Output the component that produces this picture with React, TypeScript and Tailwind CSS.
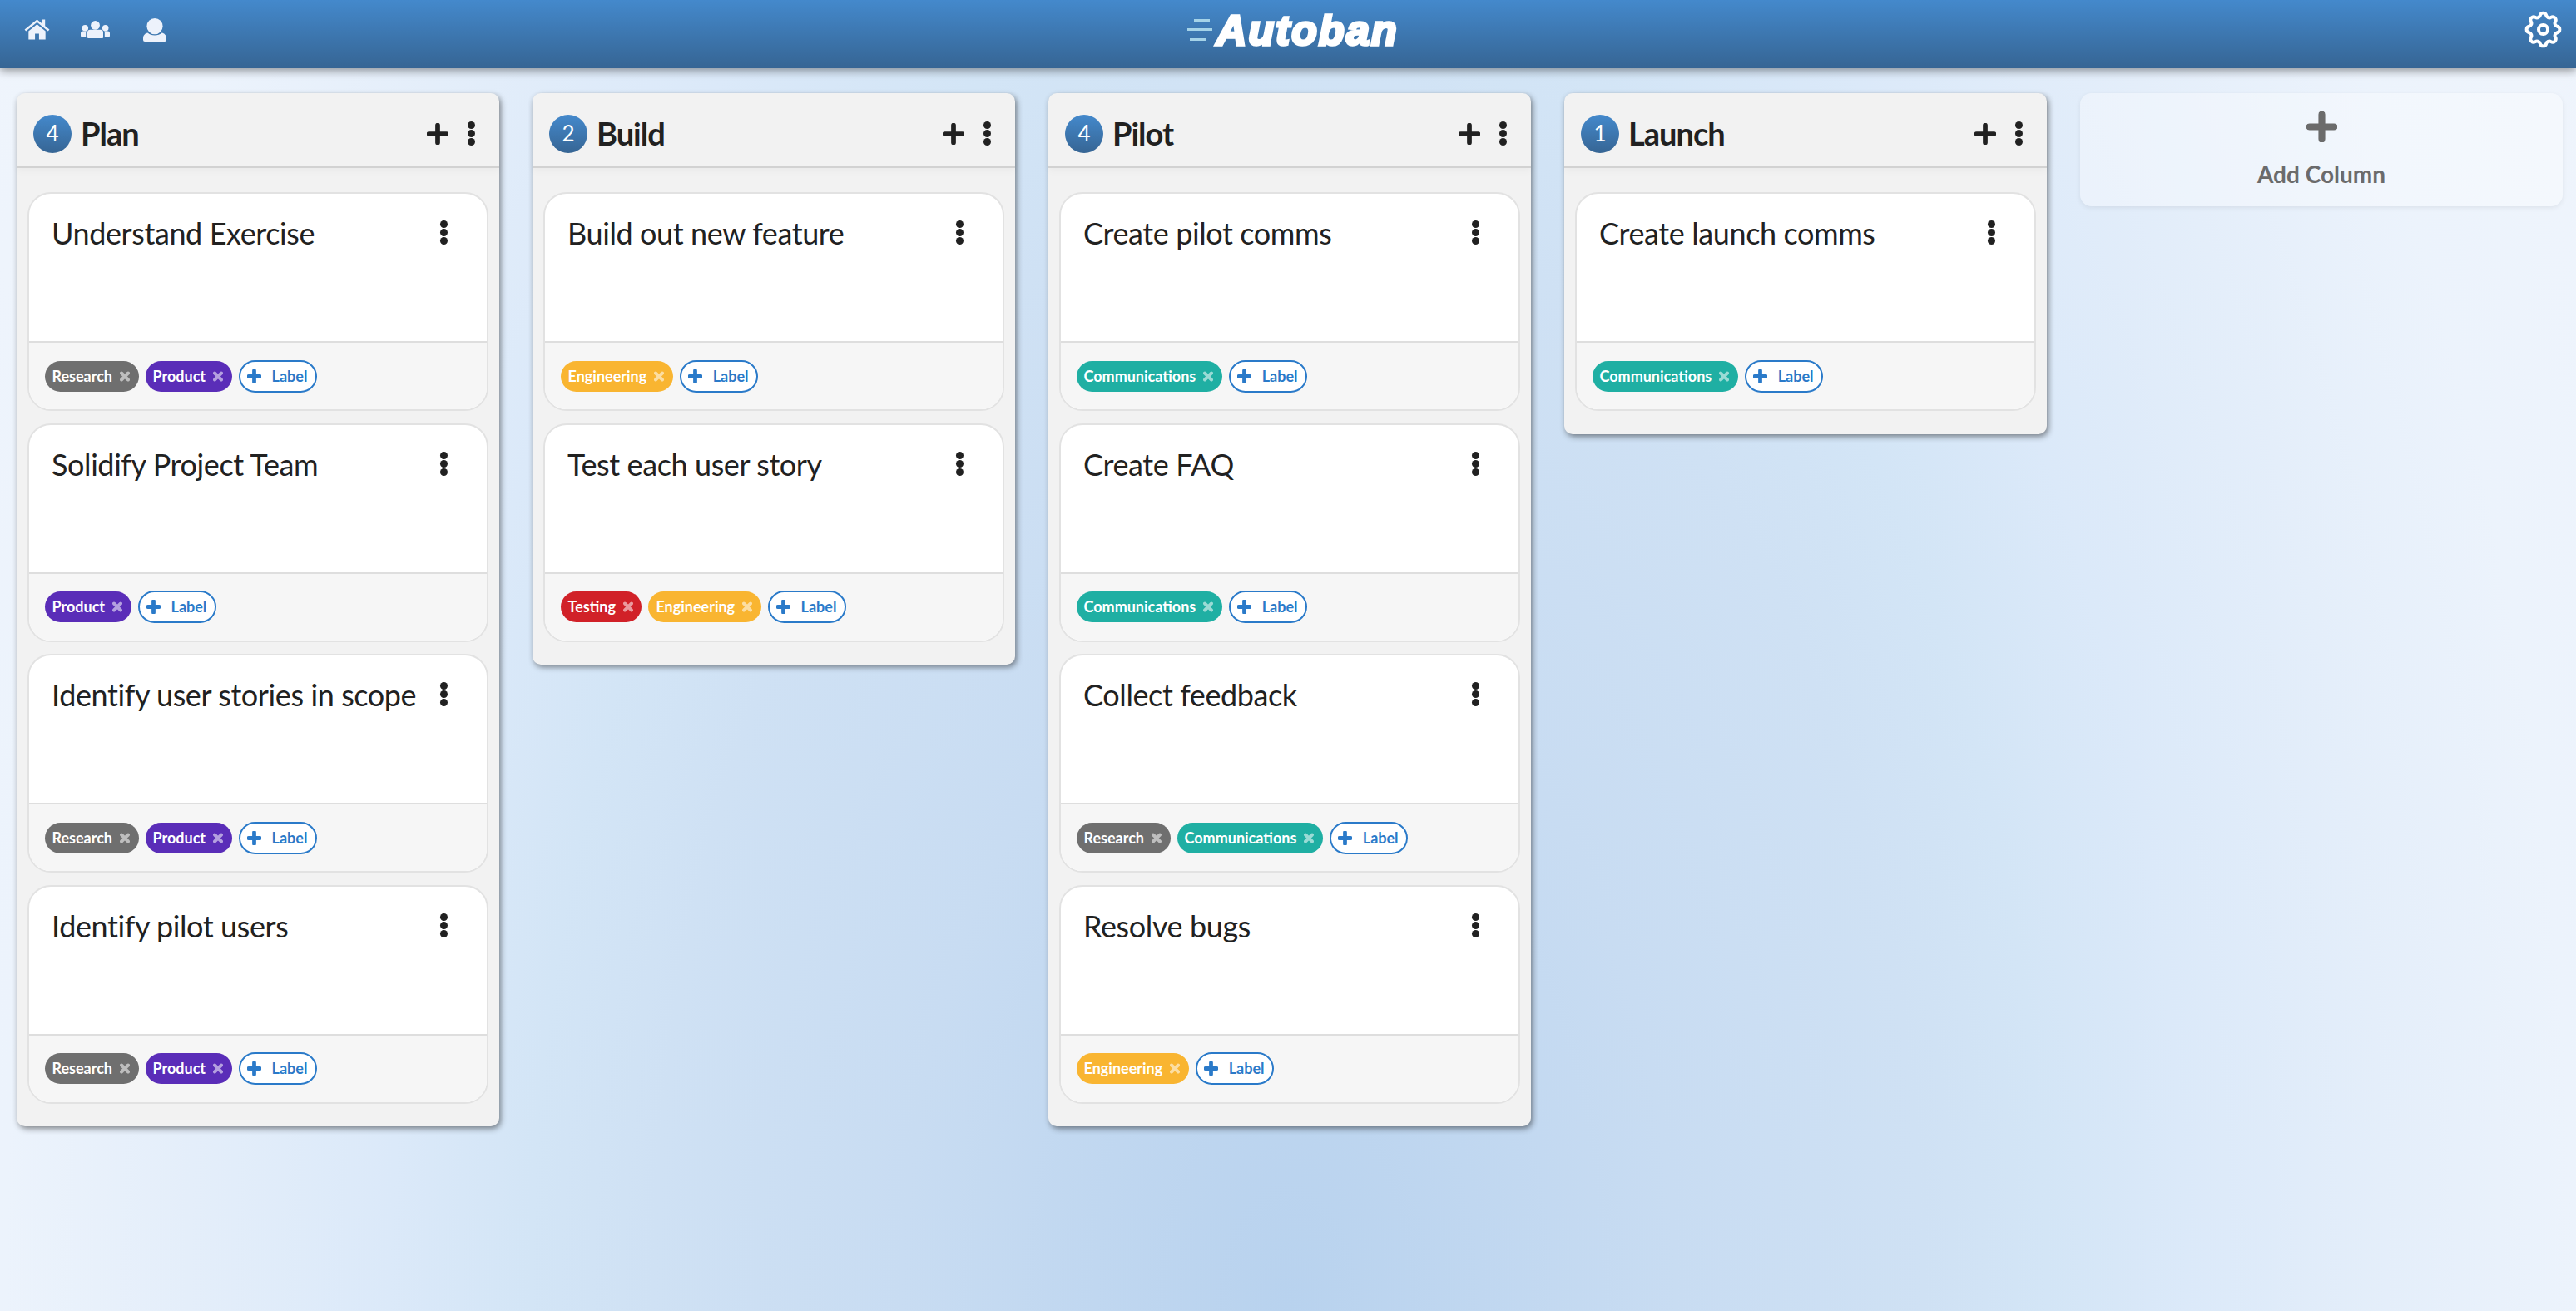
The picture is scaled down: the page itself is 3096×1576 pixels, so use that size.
import React from 'react';

const grad = 'bg-[linear-gradient(180deg,#4489cc_0%,#366594_100%)]';

function Dots() {
  const d = 'w-[9px] h-[9px] rounded-full bg-[#212121]';
  return (
    <div className="flex flex-col gap-[1px]">
      <span className={d} />
      <span className={d} />
      <span className={d} />
    </div>
  );
}

function Plus({ className, color, weight = 5.5 }: { className: string; color: string; weight?: number }) {
  return (
    <svg viewBox="0 0 25 25" className={className}>
      <path d="M12.5 2.5v20M2.5 12.5h20" stroke={color} strokeWidth={weight} strokeLinecap="round" fill="none" />
    </svg>
  );
}

const tagColors: Record<string, string> = {
  Research: 'bg-[#6f6f6f]',
  Product: 'bg-[#5a2db8]',
  Engineering: 'bg-[#f9b531]',
  Communications: 'bg-[#1fafa3]',
  Testing: 'bg-[#d12128]',
};

function Tag({ name }: { name: string }) {
  return (
    <span className={`${tagColors[name]} h-[37px] rounded-full pl-[9px] pr-[10.5px] flex items-center gap-[9px] text-white font-bold text-[18px]`}>
      <span>{name}</span>
      <svg viewBox="0 0 12 12" className="w-[12px] h-[13px]">
        <path d="M2 2l8 8M10 2l-8 8" stroke="#fff" strokeOpacity="0.55" strokeWidth="4" strokeLinecap="round" fill="none" />
      </svg>
    </span>
  );
}

function AddLabel() {
  return (
    <span className="h-[39px] w-[94px] rounded-full border-2 border-[#2a7ac9] bg-white flex items-center pl-[8px] gap-[13px] text-[#2a7ac9] font-bold text-[18px]">
      <Plus className="w-[17px] h-[17px]" color="#2a7ac9" weight={7} />
      <span>Label</span>
    </span>
  );
}

function Card({ title, tags }: { title: string; tags: string[] }) {
  return (
    <div className="h-[263px] rounded-[28px] border-2 border-[#e2e2e2] overflow-hidden flex flex-col bg-white">
      <div className="flex-1 flex justify-between pl-[27px] pr-[47px] pt-[24px]">
        <span className="text-[36px] leading-[46px] tracking-[-0.4px] text-[#212121]">{title}</span>
        <div className="pt-[8px]"><Dots /></div>
      </div>
      <div className="h-[82px] border-t-2 border-[#dedede] bg-[#f6f6f6] flex items-center pl-[18.5px] gap-[8px]">
        {tags.map((t) => <Tag key={t} name={t} />)}
        <AddLabel />
      </div>
    </div>
  );
}

function Column({ count, name, cards }: { count: number; name: string; cards: { t: string; l: string[] }[] }) {
  return (
    <div className="w-[580px] shrink-0 rounded-[10px] bg-[#f2f2f2] shadow-[2px_3px_7px_rgba(0,0,0,0.45)] pb-[27.5px]">
      <div className="h-[90px] pt-[9px] border-b-2 border-[#d2d2d2] flex items-center pl-[20px] pr-[29px] shadow-[0_4px_8px_rgba(0,0,0,0.03)]">
        <span className={`${grad} w-[46px] h-[46px] rounded-full flex items-center justify-center text-white text-[26px]`}>{count}</span>
        <span className="ml-[11px] text-[38px] font-bold tracking-[-1px] text-[#212121] flex-1">{name}</span>
        <Plus className="w-[26px] h-[26px] mr-[23px]" color="#212121" />
        <Dots />
      </div>
      <div className="pt-[29px] px-[13px] flex flex-col gap-[14.5px]">
        {cards.map((c) => <Card key={c.t} title={c.t} tags={c.l} />)}
      </div>
    </div>
  );
}

const columns = [
  { count: 4, name: 'Plan', cards: [
    { t: 'Understand Exercise', l: ['Research', 'Product'] },
    { t: 'Solidify Project Team', l: ['Product'] },
    { t: 'Identify user stories in scope', l: ['Research', 'Product'] },
    { t: 'Identify pilot users', l: ['Research', 'Product'] },
  ]},
  { count: 2, name: 'Build', cards: [
    { t: 'Build out new feature', l: ['Engineering'] },
    { t: 'Test each user story', l: ['Testing', 'Engineering'] },
  ]},
  { count: 4, name: 'Pilot', cards: [
    { t: 'Create pilot comms', l: ['Communications'] },
    { t: 'Create FAQ', l: ['Communications'] },
    { t: 'Collect feedback', l: ['Research', 'Communications'] },
    { t: 'Resolve bugs', l: ['Engineering'] },
  ]},
  { count: 1, name: 'Launch', cards: [
    { t: 'Create launch comms', l: ['Communications'] },
  ]},
];

function Header() {
  return (
    <header className={`${grad} h-[82px] shrink-0 flex items-start justify-between relative shadow-[0_3px_10px_rgba(0,0,0,0.4)]`}>
      <div className="flex items-start pl-[29px] pt-[22px] text-[#edf2fb]">
        <svg viewBox="0 1 32 26.500" preserveAspectRatio="none" className="w-[31px] h-[25px] mt-[1px]" fill="currentColor">
          <path d="M16 1.500L.6 14.300l1.700 2L16 5l13.700 11.300 1.700-2-5.400-4.500V1.600h-3.600v5.200z" />
          <path d="M16 7.500L5.500 16.400V27h8v-7.500h5V27h8V16.400z" />
        </svg>
        <svg viewBox="0 0 35 21" className="w-[35px] h-[21px] ml-[37px] mt-[3px]" fill="currentColor">
          <circle cx="17.500" cy="5.400" r="5.400" />
          <circle cx="5.300" cy="8.800" r="3.800" />
          <circle cx="29.700" cy="8.800" r="3.800" />
          <path d="M8 14c0-2 1.500-3.200 3.200-3.200h12.600c1.700 0 3.200 1.200 3.200 3.200v6a1 1 0 0 1-1 1H9a1 1 0 0 1-1-1z" />
          <path d="M0 15c0-1.500 1-2.500 2.200-2.500h4.600c-.4.500-.6 1-.6 1.800v5H1.200A1.200 1.200 0 0 1 0 18.100zM35 15c0-1.500-1-2.500-2.200-2.500h-4.600c.4.500.6 1 .6 1.800v5h5A1.200 1.200 0 0 0 35 18.100z" />
        </svg>
        <svg viewBox="0 0 28 28" className="w-[28px] h-[28px] ml-[40px]" fill="currentColor">
          <circle cx="14" cy="9.600" r="9.600" />
          <path d="M0 24c0-3.500 2.500-6 5.500-6.500 2 1.800 5 3 8.500 3s6.500-1.200 8.500-3c3 .5 5.500 3 5.500 6.500v2a2 2 0 0 1-2 2H2a2 2 0 0 1-2-2z" />
        </svg>
      </div>
      <div className="absolute left-[1427px] top-0 h-[82px] flex items-start">
        <div className="relative w-[35px] h-[60px]">
          <span className="absolute left-[8px] top-[23px] w-[19px] h-[3px] bg-[#a5d3e8]" />
          <span className="absolute left-0 top-[34px] w-[30px] h-[3px] bg-[#a5d3e8]" />
          <span className="absolute left-[3px] top-[46px] w-[19px] h-[3px] bg-[#a5d3e8]" />
        </div>
        <span className="font-['Liberation_Sans',sans-serif] font-bold italic text-white text-[50px] leading-[50px] mt-[12px] [-webkit-text-stroke:3.500px_white] tracking-[2.300px]">Autoban</span>
      </div>
      <svg viewBox="0 0 24 24" className="w-[53px] h-[53px] mr-[13px] mt-[9px]" fill="none" stroke="#fff" strokeWidth="1.800" strokeLinecap="round" strokeLinejoin="round">
        <path d="M10.325 4.317c.426-1.756 2.924-1.756 3.350 0a1.724 1.724 0 0 0 2.573 1.066c1.543-.940 3.310.826 2.370 2.370a1.724 1.724 0 0 0 1.065 2.572c1.756.426 1.756 2.924 0 3.350a1.724 1.724 0 0 0-1.066 2.573c.940 1.543-.826 3.310-2.370 2.370a1.724 1.724 0 0 0-2.572 1.065c-.426 1.756-2.924 1.756-3.350 0a1.724 1.724 0 0 0-2.573-1.066c-1.543.940-3.310-.826-2.370-2.370a1.724 1.724 0 0 0-1.065-2.572c-1.756-.426-1.756-2.924 0-3.350a1.724 1.724 0 0 0 1.066-2.573c-.940-1.543.826-3.310 2.370-2.370.996.608 2.296.070 2.572-1.065z" />
        <circle cx="12" cy="12" r="2.500" />
      </svg>
    </header>
  );
}

export default function App() {
  return (
    <div className="w-[3096px] h-[1576px] overflow-hidden flex flex-col font-['Lato',sans-serif] bg-[radial-gradient(ellipse_1860px_3300px_at_50%_100%,#b8d2ee_0%,#c8dcf2_25%,#cfe1f4_41%,#d3e5f6_49%,#dbe9f9_58%,#e4eefa_71%,#ecf3fc_83%,#f0f5fc_100%)]">
      <Header />
      <main className="flex items-start gap-[40px] pl-[20px] pt-[30px]">
        {columns.map((c) => <Column key={c.name} count={c.count} name={c.name} cards={c.cards} />)}
        <button className="w-[580px] h-[136px] shrink-0 rounded-[14px] bg-[rgba(255,255,255,0.35)] shadow-[0_2px_6px_rgba(0,0,0,0.07)] flex flex-col items-center pt-[22px]">
          <Plus className="w-[37px] h-[37px]" color="#6b6b6b" />
          <span className="mt-[20px] text-[28px] font-bold text-[#6b6b6b] leading-[36px]">Add Column</span>
        </button>
      </main>
    </div>
  );
}
